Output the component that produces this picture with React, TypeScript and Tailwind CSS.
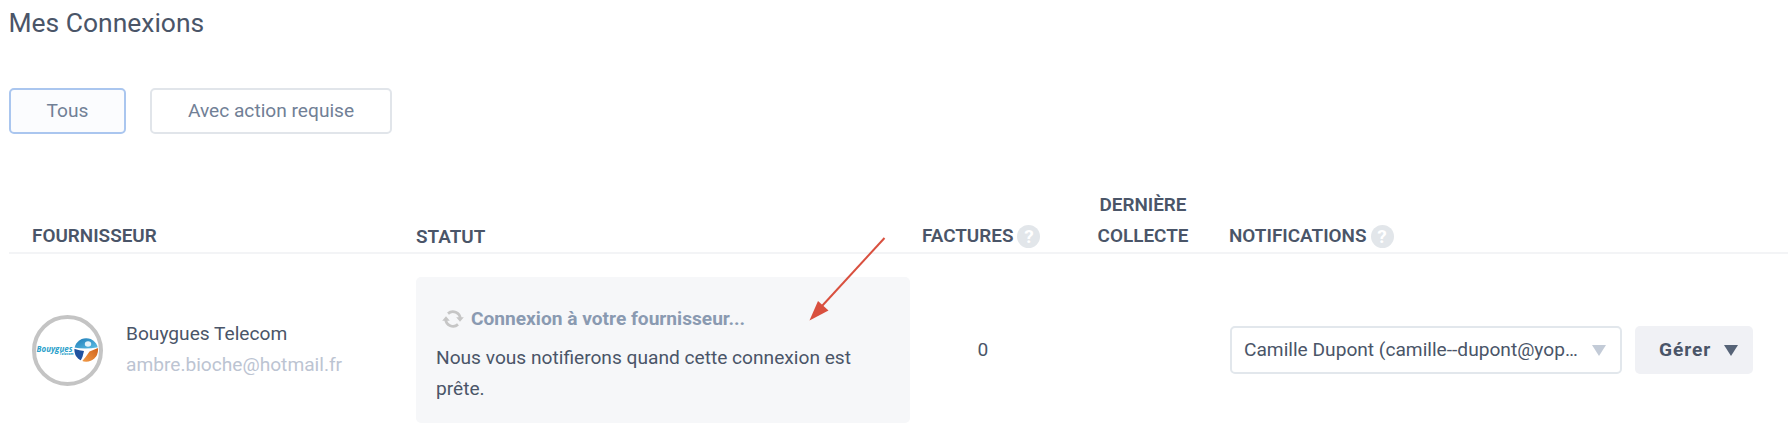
import type { ReactNode } from "react";

function FilterButton({ active, className, children }: { active?: boolean; className: string; children: ReactNode }) {
  const tone = active ? "border-[#aac6ef] bg-[#fbfcfe]" : "border-[#e1e5ea] bg-white";
  return (
    <button className={`h-[46px] rounded-[5px] border-2 pb-[1px] text-[19.15px] leading-none text-[#718096] ${tone} ${className}`}>
      {children}
    </button>
  );
}

function HelpBadge() {
  return (
    <span className="mt-[5px] ml-[4px] flex size-[23px] items-center justify-center rounded-full bg-[#e2e6ea] text-[19px] leading-none font-bold text-white">
      ?
    </span>
  );
}

function Triangle({ className }: { className: string }) {
  return (
    <svg viewBox="0 0 14 11" className={`h-[11px] w-[14px] shrink-0 ${className}`} fill="currentColor">
      <path d="M0 0h14L7 11z" />
    </svg>
  );
}

function RefreshIcon() {
  return (
    <svg viewBox="0 0 22 18" className="h-[18px] w-[22px] shrink-0" fill="none" stroke="#c6c6c6" strokeWidth="2.8">
      <path d="M6 3.6A7.4 7.4 0 0 1 18.3 8.8" />
      <path d="M16 14.4A7.4 7.4 0 0 1 3.7 9.2" />
      <path d="M14.2 7.2h7.6l-3.8 4.6zM.2 10.8h7.6L4 6.2z" fill="#c6c6c6" stroke="none" />
    </svg>
  );
}

function ProviderLogo() {
  return (
    <div className="flex size-[71px] shrink-0 items-center justify-center rounded-full border-4 border-[#c4c4c4] bg-white">
      <svg viewBox="0 0 63 63" className="size-[63px]">
        <defs>
          <linearGradient id="sky" x1="0" y1="0" x2="1" y2="1">
            <stop offset="0" stopColor="#1c79b5" />
            <stop offset="1" stopColor="#5fc0e6" />
          </linearGradient>
          <linearGradient id="amber" x1="0" y1="1" x2="1" y2="0">
            <stop offset="0" stopColor="#f4a04c" />
            <stop offset="1" stopColor="#cf6018" />
          </linearGradient>
          <clipPath id="ball">
            <circle cx="50.2" cy="31" r="11.8" />
          </clipPath>
        </defs>
        <text x="0.5" y="32.6" textLength="36" lengthAdjust="spacingAndGlyphs" fontFamily="Open Sans, sans-serif" fontSize="8.2" fontWeight="700" fontStyle="italic" fill="#2b9fca">
          Bouygues
        </text>
        <text x="23.5" y="36.4" textLength="14" lengthAdjust="spacingAndGlyphs" fontFamily="Open Sans, sans-serif" fontSize="3.8" fontWeight="700" fontStyle="italic" fill="#2b9fca">
          Telecom
        </text>
        <g clipPath="url(#ball)">
          <rect x="38" y="19" width="25" height="25" fill="#fff" />
          <path d="M38 19h25v9Q50 30.5 38 28.5z" fill="url(#sky)" />
          <path d="M38 29.8Q44 31.5 48 32Q47 38 44 43L38 44z" fill="#1f52a0" />
          <path d="M63 28.5Q57 31 53.5 32.5Q50 38 45 43.5L63 44z" fill="url(#amber)" />
          <ellipse cx="52" cy="25" rx="3.2" ry="2.7" fill="#e4f3fa" />
        </g>
      </svg>
    </div>
  );
}

const columns = "grid grid-cols-[407px_494px_147px_173px_1fr]";

export default function App() {
  return (
    <main className="relative h-[440px] w-[1788px] overflow-hidden bg-white pl-[9px] font-['Roboto',sans-serif] text-[19.15px] leading-[31px] text-[#4a5568]">
      <h1 className="-ml-[0.5px] pt-[3px] text-[26.45px] leading-[40px]">Mes Connexions</h1>

      <div className="mt-[45px] flex gap-[24px]">
        <FilterButton active className="w-[117px]">Tous</FilterButton>
        <FilterButton className="w-[242px]">Avec action requise</FilterButton>
      </div>

      <div className={`${columns} mt-[55px] h-[65px] items-end border-b-2 border-[#f3f4f6] pb-[1px] text-[18.9px] font-semibold`}>
        <div className="pl-[23px]">FOURNISSEUR</div>
        <div className="-mb-[1px]">STATUT</div>
        <div className="flex pl-[12px]">FACTURES<HelpBadge /></div>
        <div className="pr-[1px] text-center">DERNIÈRE<br />COLLECTE</div>
        <div className="-ml-[1px] flex">NOTIFICATIONS<HelpBadge /></div>
      </div>

      <div className={`${columns} mt-[23px] h-[146px] items-center`}>
        <div className="flex items-center pl-[23px]">
          <ProviderLogo />
          <div className="pb-[2px] pl-[23px]">
            <div>Bouygues Telecom</div>
            <div className="text-[#bcc4d2]">ambre.bioche@hotmail.fr</div>
          </div>
        </div>
        <div className="h-[146px] w-[494px] rounded-[5px] bg-[#f6f7f9] pt-[26px] pl-[20px]">
          <div className="flex items-center gap-[7px] pl-[6px] font-bold text-[#8a9ab1]">
            <RefreshIcon />
            Connexion à votre fournisseur...
          </div>
          <p className="mt-[8px] w-[440px]">Nous vous notifierons quand cette connexion est prête.</p>
        </div>
        <div className="pr-[1px] pb-[2px] text-center">0</div>
        <div />
        <div className="flex items-center">
          <div className="flex h-[48px] w-[392px] items-center justify-between rounded-[5px] border-2 border-[#e2e7ec] pr-[14px] pl-[12px]">
            <span className="pb-[2px] whitespace-nowrap">Camille Dupont (camille--dupont@yop…</span>
            <Triangle className="text-[#c3cbd7]" />
          </div>
          <button className="ml-[13px] flex h-[48px] w-[118px] items-center rounded-[5px] bg-[#f0f1f5] pl-[24px] font-bold tracking-[0.9px]">
            <span className="w-[65px] shrink-0 pb-[2px] text-left">Gérer</span>
            <Triangle className="text-[#566377]" />
          </button>
        </div>
      </div>

      <svg viewBox="0 0 80 90" className="absolute top-[234px] left-[806px] h-[90px] w-[80px]">
        <path d="M78.5 4L16 72" stroke="#d9503f" strokeWidth="2" fill="none" />
        <path d="M3.5 86.5L12 67L22.5 76.5z" fill="#d9503f" />
      </svg>
    </main>
  );
}
